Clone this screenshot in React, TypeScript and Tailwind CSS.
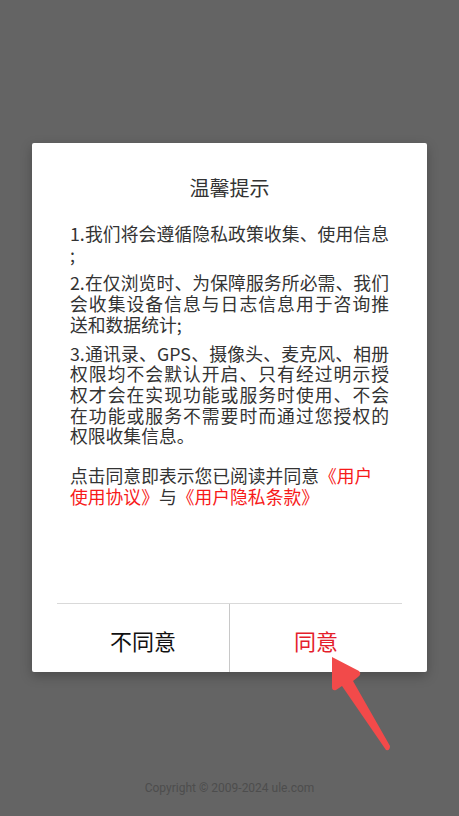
import React from 'react';

const cjk = { fontFamily: '"Noto Sans CJK SC", "Noto Sans", sans-serif' };

// each paragraph as its own lines; full lines are stretched edge to edge like the original
const paragraphs: string[][] = [
  ['1.我们将会遵循隐私政策收集、使用信息', ';'],
  ['2.在仅浏览时、为保障服务所必需、我们', '会收集设备信息与日志信息用于咨询推', '送和数据统计;'],
  [
    '3.通讯录、GPS、摄像头、麦克风、相册',
    '权限均不会默认开启、只有经过明示授',
    '权才会在实现功能或服务时使用、不会',
    '在功能或服务不需要时而通过您授权的',
    '权限收集信息。',
  ],
];

const Arrow = () => (
  <svg className="absolute left-0 top-0 pointer-events-none" width="459" height="816" viewBox="0 0 459 816">
    <path
      d="M332 657 L359 671 Q362 674 358 677 L353 681 L390 746 Q390 751 386 750 L342 686 L336 690 Q332 691 332 687 Z"
      fill="#f24a4a"
    />
  </svg>
);

export default function App() {
  return (
    <div className="relative w-full h-[816px] bg-[#646464] flex flex-col items-start overflow-hidden" style={cjk}>
      <div className="mt-[143px] ml-[32px] w-[395px] h-[529px] bg-white rounded-[2px] flex flex-col shadow-[0_4px_12px_rgba(0,0,0,0.25)]">
        <div className="pt-[31px] text-center text-[20px] leading-[28px] text-[#333]">温馨提示</div>
        <div className="mt-[21px] px-[38px] text-[17.8px] leading-[20.7px] text-[#333] flex flex-col gap-[8px] whitespace-nowrap">
          {paragraphs.map((p, i) => (
            <div key={i}>
              {p.map((line, j) => (
                <div key={j} className={j < p.length - 1 ? 'text-justify [text-align-last:justify]' : ''}>
                  {line}
                </div>
              ))}
            </div>
          ))}
          <div className="mt-[11px]">
            <div>
              点击同意即表示您已阅读并同意<span className="text-[#f71a1a]">《用户</span>
            </div>
            <div>
              <span className="text-[#f71a1a]">使用协议》</span>与<span className="text-[#f71a1a]">《用户隐私条款》</span>
            </div>
          </div>
        </div>
        <div className="mt-auto mx-[25px] border-t border-[#d9d9d9] h-[69px] flex">
          <button className="flex-1 flex items-center justify-center text-[22px] text-[#111] pt-[4px]">不同意</button>
          <div className="w-px bg-[#c8c8c8]" />
          <button className="flex-1 flex items-center justify-center text-[22px] text-[#e41e2c] pt-[4px]">同意</button>
        </div>
      </div>
      <div
        className="mt-auto mb-[20px] w-full text-center text-[12px] leading-[16px] text-[#4d4d4d]"
        style={{ fontFamily: 'Roboto, "Liberation Sans", sans-serif' }}
      >
        Copyright © 2009-2024 ule.com
      </div>
      <Arrow />
    </div>
  );
}
